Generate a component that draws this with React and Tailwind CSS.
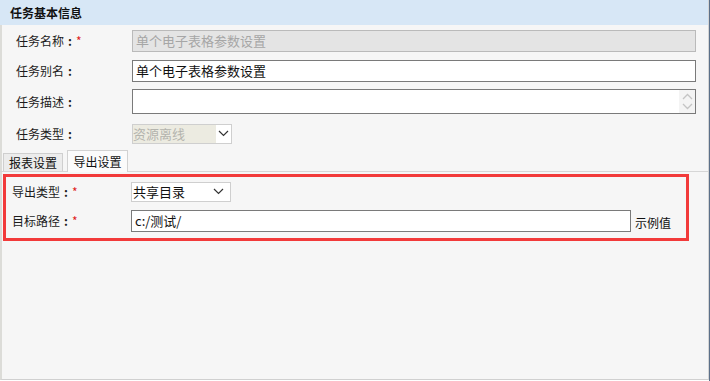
import React from "react";

const font = { fontFamily: '"Noto Sans CJK SC", "Liberation Sans", sans-serif' };

const Chevron = ({ className = "" }) => (
  <svg width="11" height="7" viewBox="0 0 11 7" className={className}>
    <polyline points="1,1 5.5,5.5 10,1" fill="none" stroke="#333" strokeWidth="1.2" />
  </svg>
);

const Label = ({ text, required }) => (
  <div className="flex items-center text-[12px] text-[#1c1c1c] leading-none">
    <span>{text}</span>
    <span className="ml-[4px] font-bold">:</span>
    {required && <span className="text-[#e0231c] ml-[4px]">*</span>}
  </div>
);

export default function App() {
  return (
    <div className="w-[710px] h-[381px] border-r border-[#5c7089] bg-white" style={font}>
      <div className="h-[380px] flex flex-col bg-[#f6f6f6] border-l-2 border-[#dcdcd8] border-r border-r-[#d4d4d4] border-b border-b-[#d0d0d0]">
        {/* header */}
        <div className="h-[25px] bg-[#d7e7f6] flex items-center pl-[10px] text-[12px] font-bold text-[#111] -ml-[2px]">
          任务基本信息
        </div>

        {/* basic fields */}
        <div className="flex flex-col pt-[5px]">
          <div className="flex items-center h-[22px]">
            <div className="w-[130px] shrink-0 pl-[14px]"><Label text="任务名称" required /></div>
            <div className="w-[564px] h-[22px] border border-[#bababa] bg-[#e4e4e4] flex items-center pl-[3px] text-[13px] text-[#a6a6a6]">
              单个电子表格参数设置
            </div>
          </div>

          <div className="flex items-center h-[22px] mt-[8px]">
            <div className="w-[130px] shrink-0 pl-[14px]"><Label text="任务别名" /></div>
            <div className="w-[564px] h-[22px] border border-[#7a7a7a] bg-white flex items-center pl-[3px] text-[13px] text-[#111]">
              单个电子表格参数设置
            </div>
          </div>

          <div className="flex items-center h-[25px] mt-[7px]">
            <div className="w-[130px] shrink-0 pl-[14px]"><Label text="任务描述" /></div>
            <div className="w-[564px] h-[25px] border border-[#7a7a7a] bg-white flex justify-end">
              <div className="w-[16px] bg-[#f4f4f4] flex flex-col items-center justify-center gap-[3px]">
                <svg width="11" height="7" viewBox="0 0 11 7">
                  <polyline points="1,6 5.5,1.5 10,6" fill="none" stroke="#c4c4c4" strokeWidth="1.3" />
                </svg>
                <svg width="11" height="7" viewBox="0 0 11 7">
                  <polyline points="1,1 5.5,5.5 10,1" fill="none" stroke="#c4c4c4" strokeWidth="1.3" />
                </svg>
              </div>
            </div>
          </div>

          <div className="flex items-center h-[19px] mt-[10px]">
            <div className="w-[130px] shrink-0 pl-[14px]"><Label text="任务类型" /></div>
            <div className="w-[100px] h-[20px] border border-[#cfcfcf] bg-white flex items-stretch">
              <div className="w-[83px] bg-[#ecebe1] flex items-center text-[13px] text-[#b4b4ae] leading-none">
                资源离线
              </div>
              <div className="flex-1 flex items-center justify-center">
                <Chevron />
              </div>
            </div>
          </div>
        </div>

        {/* tabs */}
        <div className="flex items-end h-[22px] mt-[7px] border-b border-[#d6d6d6] -ml-[2px] pl-[3px]">
          <div className="w-[60px] h-[18px] border border-b-0 border-[#cfcfcf] bg-[#ececec] flex items-center justify-center text-[12px] text-[#111]">
            报表设置
          </div>
          <div className="w-[61px] h-[22px] ml-[4px] border border-b-0 border-[#d2d2d2] bg-[#fbfbfb] flex items-center justify-center text-[12px] text-[#111] -mb-px">
            导出设置
          </div>
        </div>

        {/* export settings, highlighted */}
        <div className="mt-[2px] ml-[1px] w-[686px] border-[3px] border-[#f23a3a] pt-[5px] pb-[6px] pl-[6px] flex flex-col">
          <div className="flex items-center h-[19px]">
            <div className="w-[119px] shrink-0"><Label text="导出类型" required /></div>
            <div className="w-[100px] h-[20px] border border-[#cfcfcf] bg-white flex items-center justify-between pr-[6px]">
              <span className="text-[13px] text-[#111] leading-none pl-[1px]">共享目录</span>
              <Chevron />
            </div>
          </div>
          <div className="flex items-center h-[22px] mt-[9px]">
            <div className="w-[119px] shrink-0"><Label text="目标路径" required /></div>
            <div className="w-[500px] h-[22px] border border-[#7a7a7a] bg-white flex items-center pl-[3px] text-[13px] text-[#111]">
              c:/测试/
            </div>
            <span className="ml-[4px] text-[12px] text-[#111] mt-[4px]">示例值</span>
          </div>
        </div>
      </div>
    </div>
  );
}
